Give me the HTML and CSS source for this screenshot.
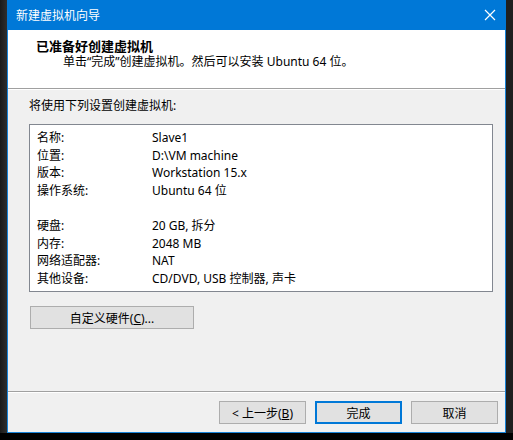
FILE: index.html
```html
<!DOCTYPE html>
<html lang="zh-CN">
  <head>
    <meta charset="UTF-8" />
    <meta name="viewport" content="width=device-width, initial-scale=1.0" />
    <title>新建虚拟机向导</title>
    <link rel="stylesheet" href="styles.css">
  </head>

  <body>
    <div class="desktop">
      <div class="side-left"></div>

      <div class="wizard">
        <div class="wizard-title">
          <span>新建虚拟机向导</span>
          <svg class="close-icon" width="12" height="12" viewBox="0 0 12 12">
            <path d="M1 1 L11 11 M11 1 L1 11" stroke="#fff" stroke-width="1.2" fill="none" />
          </svg>
        </div>

        <div class="wizard-header">
          <h1>已准备好创建虚拟机</h1>
          <p>单击“完成”创建虚拟机。然后可以安装 Ubuntu 64 位。</p>
        </div>

        <div class="wizard-body">
          <p class="intro">将使用下列设置创建虚拟机:</p>

          <div class="summary">
            <div class="row"><span class="label">名称:</span><span>Slave1</span></div>
            <div class="row"><span class="label">位置:</span><span>D:\VM machine</span></div>
            <div class="row"><span class="label">版本:</span><span>Workstation 15.x</span></div>
            <div class="row"><span class="label">操作系统:</span><span>Ubuntu 64 位</span></div>
            <div class="row"></div>
            <div class="row"><span class="label">硬盘:</span><span>20 GB, 拆分</span></div>
            <div class="row"><span class="label">内存:</span><span>2048 MB</span></div>
            <div class="row"><span class="label">网络适配器:</span><span>NAT</span></div>
            <div class="row"><span class="label">其他设备:</span><span>CD/DVD, USB 控制器, 声卡</span></div>
          </div>

          <button class="btn btn-custom">自定义硬件(<u>C</u>)...</button>
        </div>

        <div class="wizard-footer">
          <button class="btn">&lt; 上一步(<u>B</u>)</button>
          <button class="btn btn-default">完成</button>
          <button class="btn">取消</button>
        </div>
      </div>

      <div class="side-right"></div>
    </div>
  </body>
</html>
```

FILE: styles.css
```css
* {
  margin: 0;
  padding: 0;
  box-sizing: border-box;
}

body {
  background: #000;
  font-family: "Noto Sans", "Noto Sans CJK SC", sans-serif;
  font-size: 12px;
  color: #000;
}

.desktop {
  display: flex;
  width: 513px;
  height: 433px;
}

.side-left {
  width: 7px;
  background: linear-gradient(90deg, #1a1a1a, #2e2e2e);
}

.side-right {
  flex: 1;
  background: #1f1f1f;
}

.wizard {
  width: 499px;
  display: flex;
  flex-direction: column;
  background: #f0f0f0;
  border: 1px solid #1883d7;
  border-top: none;
}

.wizard-title {
  height: 30px;
  margin: 0 -1px;
  padding: 0 0 0 9px;
  background: #0078d7;
  color: #fff;
  display: flex;
  align-items: center;
  justify-content: space-between;
}

.close-icon {
  margin-right: 10px;
}

.wizard-header {
  height: 59px;
  background: #fff;
  border-bottom: 1px solid #a0a0a0;
  box-shadow: 0 1px 0 #fff;
  padding: 7px 0 0 28px;
}

.wizard-header h1 {
  font-size: 13px;
  font-weight: 700;
  line-height: 18px;
}

.wizard-header p {
  padding-left: 27px;
  line-height: 14px;
}

.wizard-body {
  flex: 1;
  padding: 8px 0 0 21px;
  border-bottom: 1px solid #a0a0a0;
}

.intro {
  line-height: 18px;
}

.summary {
  width: 464px;
  height: 168px;
  margin-top: 9px;
  background: #fff;
  border: 1px solid #828790;
  padding: 4px 0 0 7px;
}

.row {
  display: flex;
  height: 17.6px;
  line-height: 17.6px;
}

.row .label {
  width: 115px;
}

.btn {
  font-family: inherit;
  font-size: 12px;
  height: 23px;
  width: 87px;
  background: #e1e1e1;
  border: 1px solid #adadad;
  color: #000;
}

.btn-custom {
  width: 164px;
  margin: 14px 0 0 1px;
}

.btn-default {
  border: 2px solid #0078d7;
}

.wizard-footer {
  height: 40px;
  display: flex;
  justify-content: flex-end;
  gap: 9px;
  padding: 9px 7px 0 0;
  box-shadow: inset 0 1px 0 #fff;
}
```
